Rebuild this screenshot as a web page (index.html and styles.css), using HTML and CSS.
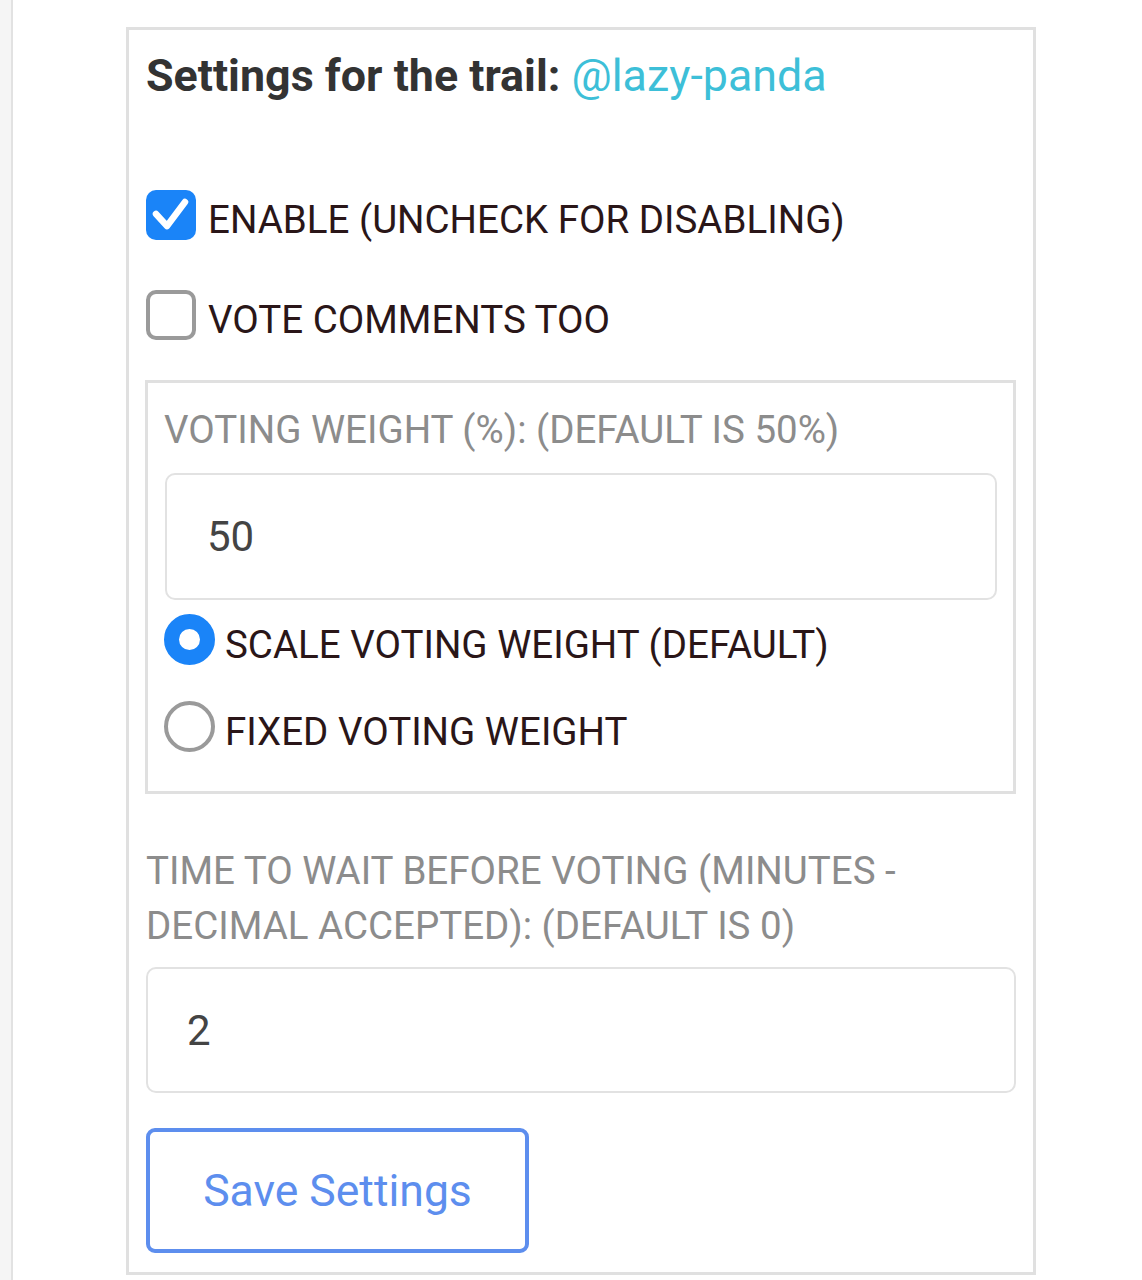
FILE: index.html
```html
<!DOCTYPE html>
<html>
<head>
<meta charset="utf-8">
<link rel="stylesheet" href="styles.css">
</head>
<body>
<div class="page">
  <div class="main">
    <div class="card">
      <h2 class="title">Settings for the trail: <span class="user">@lazy-panda</span></h2>

      <label class="check-row first">
        <span class="box checked">
          <svg viewBox="0 0 50 50" width="50" height="50"><path d="M10 24 L21 36 L39 12" fill="none" stroke="#fff" stroke-width="6.5" stroke-linecap="round" stroke-linejoin="round"/></svg>
        </span>
        <span class="text">ENABLE (UNCHECK FOR DISABLING)</span>
      </label>

      <label class="check-row second">
        <span class="box"></span>
        <span class="text">VOTE COMMENTS TOO</span>
      </label>

      <div class="group">
        <div class="field-label">VOTING WEIGHT (%): (DEFAULT IS 50%)</div>
        <div class="input first-input">50</div>
        <label class="radio-row r1">
          <span class="radio on"></span>
          <span class="text">SCALE VOTING WEIGHT (DEFAULT)</span>
        </label>
        <label class="radio-row r2">
          <span class="radio"></span>
          <span class="text">FIXED VOTING WEIGHT</span>
        </label>
      </div>

      <div class="field-label wait">TIME TO WAIT BEFORE VOTING (MINUTES - DECIMAL ACCEPTED): (DEFAULT IS 0)</div>
      <div class="input second-input">2</div>

      <div class="actions">
        <button class="save">Save Settings</button>
      </div>
    </div>
  </div>
</div>
</body>
</html>
```

FILE: styles.css
```css
html, body {
  margin: 0;
  padding: 0;
}
body {
  font-family: Roboto, "Liberation Sans", Arial, sans-serif;
  background: #ffffff;
}
.page {
  padding-left: 11px;
  background: #f5f5f5;
  min-height: 1280px;
  display: flex;
}
.main {
  flex: 1;
  border-left: 2px solid #e2e2e2;
  background: #ffffff;
  padding: 27px 0 0 113px;
}
.card {
  width: 910px;
  border: 3px solid #e0e0e0;
  padding: 19px 17px 19px 17px;
  box-sizing: border-box;
  display: flex;
  flex-direction: column;
}
.title {
  margin: 0;
  font-size: 44.8px;
  line-height: 54px;
  font-weight: 700;
  color: #333333;
}
.user {
  font-weight: 400;
  color: #3dbfd8;
}
.check-row, .radio-row {
  display: flex;
  align-items: center;
  height: 50px;
}
.check-row .text, .radio-row .text {
  font-size: 38.5px;
  line-height: 41px;
  margin-top: 9px;
  color: #2a1618;
}
.check-row.first { margin-top: 87px; }
.check-row.second { margin-top: 50px; }
.box {
  width: 50px;
  height: 50px;
  box-sizing: border-box;
  border: 4px solid #9a9a9a;
  border-radius: 10px;
  margin-right: 12px;
  flex: none;
}
.box.checked {
  border: none;
  background: #1a84f8;
}
.box svg { display: block; }
.group {
  margin-top: 40px;
  margin-left: -1px;
  border: 3px solid #e0e0e0;
  padding: 24px 16px 39px 16px;
  display: flex;
  flex-direction: column;
}
.field-label {
  font-size: 38.5px;
  line-height: 46px;
  color: #8c8c8c;
}
.input {
  border: 2px solid #e2e2e2;
  border-radius: 10px;
  height: 127px;
  box-sizing: border-box;
  display: flex;
  align-items: center;
  font-size: 42px;
  color: #444444;
  flex: none;
}
.first-input {
  margin-top: 20px;
  margin-left: 1px;
  padding-left: 40px;
}
.radio-row.r1 { margin-top: 14px; height: 51px; }
.radio-row.r2 { margin-top: 36px; height: 51px; }
.radio {
  width: 51px;
  height: 51px;
  box-sizing: border-box;
  border-radius: 50%;
  border: 4px solid #9a9a9a;
  margin-right: 10px;
  flex: none;
}
.radio.on {
  border: 15px solid #1a84f8;
  background: #ffffff;
}
.field-label.wait {
  margin-top: 49px;
  line-height: 55px;
}
.second-input {
  margin-top: 14px;
  padding-left: 39px;
  height: 126px;
}
.actions {
  margin-top: 35px;
  display: flex;
}
.save {
  width: 383px;
  height: 125px;
  box-sizing: border-box;
  border: 4px solid #5d8eee;
  border-radius: 9px;
  background: #ffffff;
  color: #5d8eee;
  font-family: Roboto, "Liberation Sans", Arial, sans-serif;
  font-size: 44.5px;
  padding: 0;
}
```
